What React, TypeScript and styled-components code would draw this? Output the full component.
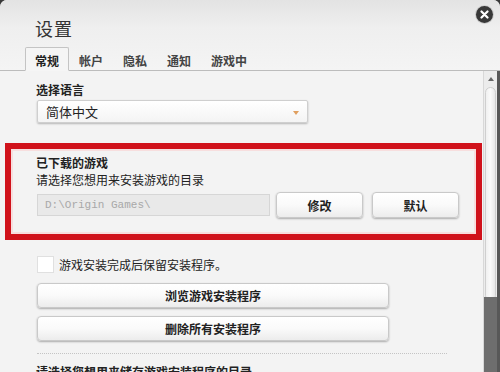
import React from "react";
import styled, { createGlobalStyle } from "styled-components";

const GlobalStyle = createGlobalStyle`
  html, body {
    margin: 0;
    padding: 0;
    background: #3a3a3a;
  }
  * {
    box-sizing: border-box;
  }
`;

const FONT = `"Noto Sans CJK SC", "Liberation Sans", sans-serif`;

const Window = styled.div`
  width: 500px;
  height: 372px;
  overflow: hidden;
  border-radius: 7px 7px 0 0;
  background: #f3f3f3;
  font-family: ${FONT};
  color: #222;
  display: flex;
  flex-direction: column;
`;

const Header = styled.div`
  position: relative;
  height: 71px;
  padding: 15px 0 0 25px;
  background: linear-gradient(#e3e3e3, #efefef 40%, #f4f4f4);
  border-bottom: 1px solid #bcbcbc;
  display: flex;
  flex-direction: column;
  justify-content: space-between;
`;

const Title = styled.h1`
  margin: 0 0 0 10px;
  font-size: 18px;
  line-height: 26px;
  font-weight: 400;
  color: #333;
  letter-spacing: 1px;
`;

const CloseButton = styled.div`
  position: absolute;
  top: 6px;
  right: 7px;
  width: 17px;
  height: 17px;
  border-radius: 50%;
  background: #383838;
  box-shadow: 0 0 0 1px #cfcfcf;
  display: flex;
  align-items: center;
  justify-content: center;
`;

const Tabs = styled.div`
  display: flex;
  margin-bottom: -1px;
`;

const Tab = styled.div<{ $active?: boolean }>`
  height: 24px;
  padding: 1px 9px 0;
  font-size: 12px;
  font-weight: 700;
  line-height: 23px;
  color: ${(p) => (p.$active ? "#222" : "#444")};
  background: ${(p) => (p.$active ? "#f5f5f5" : "transparent")};
  border: 1px solid ${(p) => (p.$active ? "#c4c4c4" : "transparent")};
  border-bottom-color: ${(p) => (p.$active ? "#f5f5f5" : "transparent")};
  border-radius: 2px 2px 0 0;
`;

const Body = styled.div`
  flex: 1;
  display: flex;
  min-height: 0;
  border-right: 3px solid #585858;
`;

const Content = styled.div`
  flex: 1;
  padding-top: 10px;
  overflow: hidden;
`;

const Section = styled.div`
  padding-left: 36px;
`;

const Label = styled.div<{ $bold?: boolean }>`
  font-size: 12px;
  line-height: 17px;
  font-weight: ${(p) => (p.$bold ? 700 : 400)};
  color: #222;
  white-space: nowrap;
`;

const Select = styled.div`
  margin: 2px 0 0 1px;
  width: 271px;
  height: 23px;
  padding: 0 8px;
  display: flex;
  align-items: center;
  justify-content: space-between;
  font-size: 13px;
  color: #222;
  background: linear-gradient(#ffffff, #f4f4f4);
  border: 1px solid #cfcfcf;
  border-radius: 2px;
  box-shadow: 0 1px 2px rgba(0, 0, 0, 0.25);
`;

const Caret = styled.span`
  width: 0;
  height: 0;
  border-left: 3px solid transparent;
  border-right: 3px solid transparent;
  border-top: 4px solid #e0a060;
  margin-top: 2px;
`;

const RedBox = styled.div`
  margin: 20px 1px 0 5px;
  height: 97px;
  border: 6px solid #d0121b;
  box-shadow: inset 0 0 0 2px #f7dede;
  padding: 5px 0 0 25px;
`;

const PathRow = styled.div`
  margin-top: 4px;
  display: flex;
  align-items: center;
  gap: 6px;
`;

const PathInput = styled.div`
  margin-left: 1px;
  width: 233px;
  height: 22px;
  padding: 0 7px;
  display: flex;
  align-items: center;
  font-family: "Liberation Mono", monospace;
  font-size: 11px;
  color: #a8a8a8;
  background: #e9e9e9;
  border: 1px solid #d6d6d6;
`;

const Button = styled.div<{ $width: number; $gapLeft?: number }>`
  width: ${(p) => p.$width}px;
  height: 26px;
  margin-left: ${(p) => p.$gapLeft ?? 0}px;
  display: flex;
  align-items: center;
  justify-content: center;
  font-size: 12px;
  font-weight: 700;
  color: #222;
  background: linear-gradient(#ffffff, #fafafa 50%, #ececec);
  border: 1px solid #c9c9c9;
  border-radius: 4px;
  box-shadow: 0 1px 2px rgba(0, 0, 0, 0.3);
`;

const WideButton = styled(Button)`
  height: 25px;
  margin-left: 1px;
`;

const CheckRow = styled.div`
  margin-top: 16px;
  display: flex;
  align-items: center;
  gap: 5px;
`;

const CheckBox = styled.div`
  margin-left: 1px;
  width: 17px;
  height: 17px;
  background: #fff;
  border: 1px solid #e0e0e0;
`;

const ButtonStack = styled.div`
  margin-top: 10px;
  display: flex;
  flex-direction: column;
  gap: 8px;
`;

const Divider = styled.div`
  margin: 12px 0 0 1px;
  width: 410px;
  border-top: 1px dotted #c4c4c4;
`;

const BottomLabel = styled(Label)`
  margin-top: 9px;
`;

const Scrollbar = styled.div`
  width: 14px;
  display: flex;
  flex-direction: column;
  background: #ececec;
  border-left: 1px solid #d8d8d8;
`;

const ArrowUp = styled.div`
  height: 16px;
  display: flex;
  align-items: center;
  justify-content: center;
  &::before {
    content: "";
    border-left: 3px solid transparent;
    border-right: 3px solid transparent;
    border-bottom: 4px solid #666;
  }
`;

const Thumb = styled.div`
  height: 214px;
  margin: 0 1px;
  border-radius: 6px;
  background: linear-gradient(90deg, #f0f0f0, #fafafa 50%, #e8e8e8);
  border: 1px solid #cfcfcf;
`;

const Track = styled.div`
  flex: 1;
  margin-top: -4px;
  background: #6e6e6e;
`;

export default function App() {
  return (
    <>
      <GlobalStyle />
      <Window>
        <Header>
          <Title>设置</Title>
          <CloseButton>
            <svg width="9" height="9" viewBox="0 0 9 9">
              <path d="M1.5 1.5 L7.5 7.5 M7.5 1.5 L1.5 7.5" stroke="#fff" strokeWidth="2.2" strokeLinecap="round" />
            </svg>
          </CloseButton>
          <Tabs>
            <Tab $active>常规</Tab>
            <Tab>帐户</Tab>
            <Tab>隐私</Tab>
            <Tab>通知</Tab>
            <Tab>游戏中</Tab>
          </Tabs>
        </Header>
        <Body>
          <Content>
            <Section>
              <Label $bold>选择语言</Label>
              <Select>
                <span>简体中文</span>
                <Caret />
              </Select>
            </Section>
            <RedBox>
              <Label $bold>已下载的游戏</Label>
              <Label>请选择您想用来安装游戏的目录</Label>
              <PathRow>
                <PathInput>D:\Origin Games\</PathInput>
                <Button $width={87}>修改</Button>
                <Button $width={87} $gapLeft={3}>默认</Button>
              </PathRow>
            </RedBox>
            <Section>
              <CheckRow>
                <CheckBox />
                <Label>游戏安装完成后保留安装程序。</Label>
              </CheckRow>
              <ButtonStack>
                <WideButton $width={352}>浏览游戏安装程序</WideButton>
                <WideButton $width={352}>删除所有安装程序</WideButton>
              </ButtonStack>
              <Divider />
              <BottomLabel $bold>请选择您想用来储存游戏安装程序的目录</BottomLabel>
            </Section>
          </Content>
          <Scrollbar>
            <ArrowUp />
            <Thumb />
            <Track />
          </Scrollbar>
        </Body>
      </Window>
    </>
  );
}
